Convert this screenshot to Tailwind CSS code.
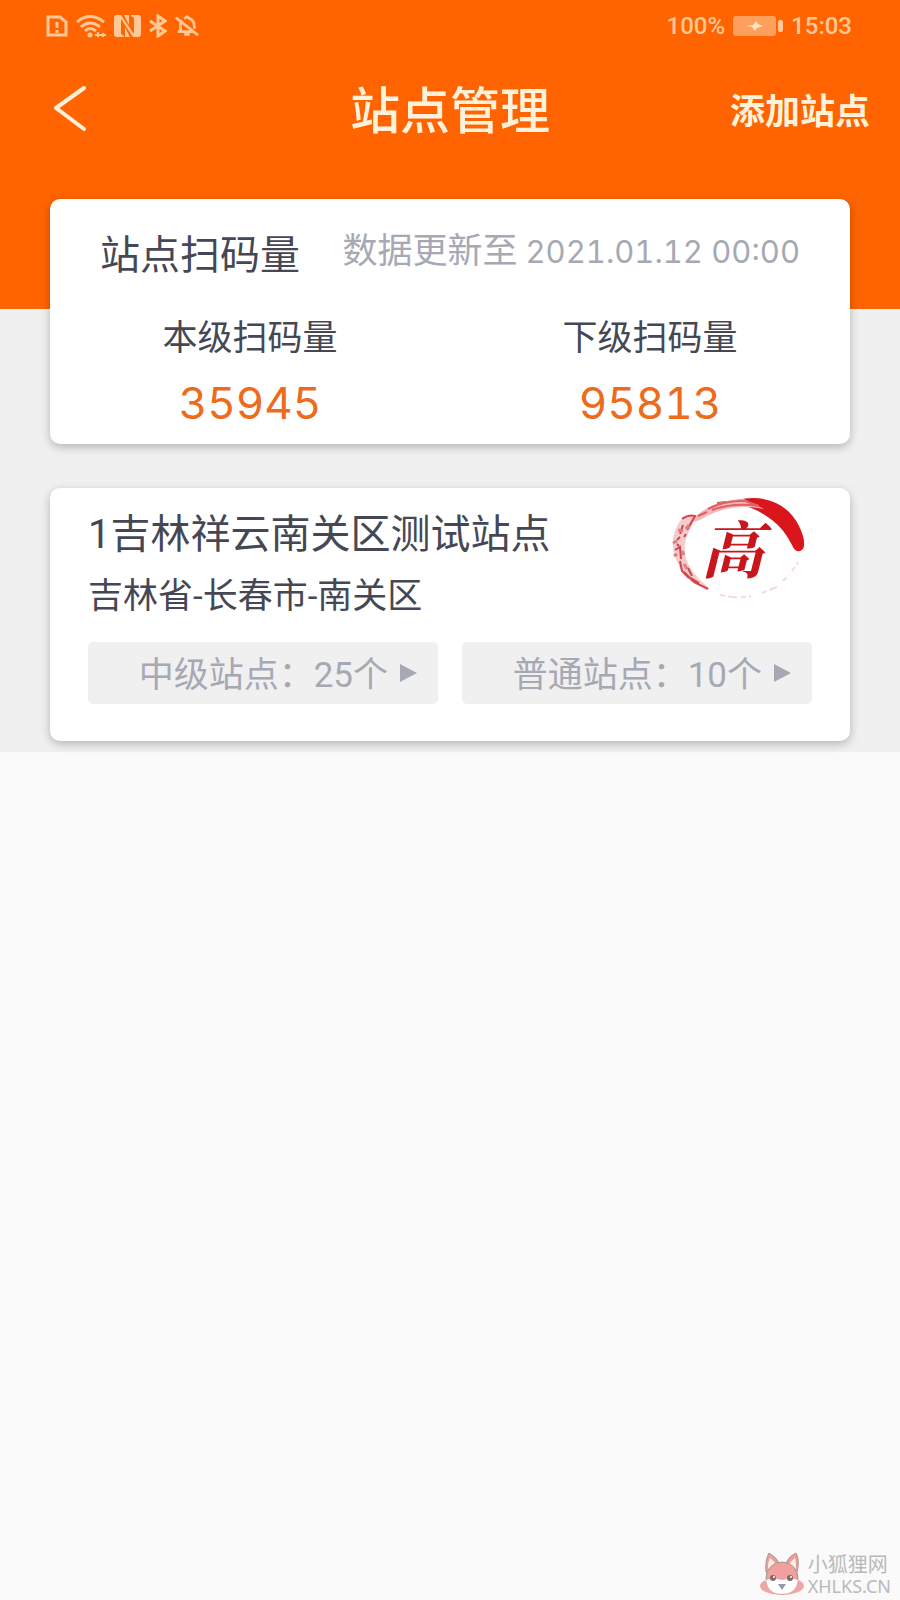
<!DOCTYPE html>
<html lang="zh-CN">
<head>
<meta charset="utf-8">
<meta name="viewport" content="width=device-width, initial-scale=1">
<title>站点管理</title>
<script src="https://cdn.jsdelivr.net/npm/@tailwindcss/browser@4"></script>
</head>
<body class="flex min-h-screen flex-col bg-[#fafafa] font-['Roboto','Noto_Sans_CJK_SC',sans-serif] text-[#454854]">
<div class="bg-[#f0f0f0] pb-[11px]">
  <header class="bg-[#ff6400] pb-[143px] text-[#fff1da]">
    <div class="flex h-[52px] items-center justify-between pr-12 pl-[46px] text-[24px] font-medium text-[#ffc896]">
      <div class="flex items-center gap-2">
        <svg class="h-6 w-[22px]" viewBox="0 0 22 24" fill="none" stroke="currentColor" stroke-width="3" aria-label="SIM"><path d="M2 3h12l6 5v13H2zM11 8v6M11 16v3"/></svg>
        <svg class="h-6 w-[30px]" viewBox="0 0 30 24" fill="none" stroke="currentColor" stroke-width="3" aria-label="Wi-Fi"><path d="M1 8q13-11 27 0M5 13q9-8 19 0M9 17q5-5 11 0"/><circle cx="14" cy="21" r="2.5" fill="currentColor" stroke="none"/><path d="M19 21h11M22 18v5M27 19v4" stroke-width="2"/></svg>
        <svg class="h-6 w-[27px]" viewBox="0 0 27 24" aria-label="NFC"><path d="M3 1h4l13 19V4l-3-2V1h7q3 0 3 3v16q0 3-3 3h-5L7 5v15l3 2v1H3q-3 0-3-3V4q0-3 3-3z" fill="currentColor"/><path d="M10 1h5v10zM11 13v10h5z" fill="currentColor"/></svg>
        <svg class="h-6 w-[18px]" viewBox="0 0 18 24" fill="none" stroke="currentColor" stroke-width="3" aria-label="Bluetooth"><path d="M1 7l15 10-7 5V2l7 5L1 17"/></svg>
        <svg class="h-6 w-[24px]" viewBox="0 0 26 24" fill="none" stroke="currentColor" stroke-width="3" aria-label="Silent"><path d="M1 3l24 19M3 18h17M6 18v-8q0-2 2-4M10 4l3-2 3 2q5 2 5 9v2M10 21h6"/></svg>
      </div>
      <div class="flex items-center gap-2">
        <span>100%</span>
        <svg class="h-5 w-[50px]" viewBox="0 0 50 20" aria-label="Battery"><rect width="43" height="20" rx="3" fill="#ff9f5e"/><rect x="45" y="4" width="5" height="12" rx="2" fill="currentColor"/><path d="M13 10l7-1 3-4 2 3 5 2-6 2-2 3-3-4z" fill="#ffe0bd"/></svg>
        <time>15:03</time>
      </div>
    </div>
    <nav class="grid h-[114px] grid-cols-[1fr_auto_1fr] items-center px-[30px]">
      <button type="button" aria-label="返回" class="ml-[22px] justify-self-start"><svg class="h-[50px] w-9" viewBox="0 0 36 50" fill="none" stroke="currentColor" stroke-width="4" stroke-linecap="round" stroke-linejoin="round"><path d="M32 4L4 24l28 21"/></svg></button>
      <h1 class="pt-1.5 text-[50px] leading-none font-medium">站点管理</h1>
      <button type="button" class="justify-self-end pt-1.5 text-[35px] leading-none font-bold">添加站点</button>
    </nav>
  </header>
  <main class="mx-[50px] -mt-[110px] flex flex-col gap-11">
    <section class="rounded-[10px] bg-white pt-[29px] pb-[13px] shadow-[0_3px_10px_rgba(0,0,0,0.25)]">
      <div class="flex items-center justify-between px-[50px] leading-[48px]">
        <h2 class="pt-2 text-[40px] leading-[40px]">站点扫码量</h2>
        <p class="flex items-center gap-2 text-[35px] text-[#a6a9b4]"><span>数据更新至</span><time class="font-['Inter'] text-[31px] tabular-nums">2021.01.12 00:00</time></p>
      </div>
      <dl class="mt-[43px] grid grid-cols-2 text-center">
        <div><dt class="text-[35px] leading-[40px]">本级扫码量</dt><dd class="mt-4 font-['Inter'] text-[44px] leading-[56px] text-[#ed6b1d] tabular-nums">35945</dd></div>
        <div><dt class="text-[35px] leading-[40px]">下级扫码量</dt><dd class="mt-4 font-['Inter'] text-[44px] leading-[56px] text-[#ed6b1d] tabular-nums">95813</dd></div>
      </dl>
    </section>
    <section class="rounded-[10px] bg-white px-[38px] pt-2 pb-[37px] shadow-[0_3px_10px_rgba(0,0,0,0.25)]">
      <div class="flex items-start justify-between">
        <div class="pt-[15px]">
          <h2 class="text-[40px] leading-[48px]">1吉林祥云南关区测试站点</h2>
          <p class="mt-[18px] text-[35px] leading-[40px]">吉林省-长春市-南关区</p>
        </div>
        <svg class="mr-1.5 h-[104px] w-[136px] shrink-0" viewBox="0 0 136 104" aria-label="高">
          <path d="M66 4Q90-1 106 7Q121 14 129 30Q135 42 134 50Q133 56 127 55Q124 54 122 49Q114 33 102 24Q88 13 72 9Z" fill="#da161c"/>
          <path d="M26 20Q45 3 74 3L94 13Q58 6 30 24L20 27Z" fill="#f3b7b9"/>
          <path d="M38 13q17-9 37-8l14 5Q64 6 42 14M28 20l9-4M47 7l9-1" fill="none" stroke="#dd6166" stroke-width="2"/>
          <path d="M10 25Q18 18 26 20l-5 12Q5 58 29 83l11 10Q17 89 9 70Q-4 46 10 25Z" fill="#f5cccd"/>
          <path d="M12 23q7-5 13-3l-8 14M13 29l-3 9M7 44l3-3M5 54l5-3 1 12M10 65l2 10 7 7M14 76l10 10 14 7M21 82l8 5M7 48l2 2M14 41l2-3M18 72l4 8" fill="none" stroke="#d2454b" stroke-width="2"/>
          <path d="M3 47l4-2M4 60l3-2M8 34l5 1M12 55l2 4M16 33l3-4M14 68l3 5" stroke="#e27c80" stroke-width="3"/>
          <path d="M50 99q17 4 31 1M92 97l15-6M113 85l6-6M122 75l6-9" fill="none" stroke="#f8d9da" stroke-width="2" stroke-dasharray="5 3 9 4"/>
          <text x="62" y="77" text-anchor="middle" class="fill-[#c9161c] font-['Noto_Serif_CJK_SC','Noto_Sans_CJK_SC',serif] text-[62px] font-bold italic">高</text>
        </svg>
      </div>
      <div class="mt-[25px] grid grid-cols-2 gap-6">
        <button type="button" class="flex h-[62px] items-center justify-end gap-3 rounded-[5px] bg-[#f0f0f0] pr-[21px] text-[35px] leading-none text-[#a6a9b4]"><span class="pt-1">中级站点：25个</span><svg class="h-[18px] w-[17px]" viewBox="0 0 17 18" fill="currentColor" aria-hidden="true"><path d="M0 0l17 9-17 9z"/></svg></button>
        <button type="button" class="flex h-[62px] items-center justify-end gap-3 rounded-[5px] bg-[#f0f0f0] pr-[21px] text-[35px] leading-none text-[#a6a9b4]"><span class="pt-1">普通站点：10个</span><svg class="h-[18px] w-[17px]" viewBox="0 0 17 18" fill="currentColor" aria-hidden="true"><path d="M0 0l17 9-17 9z"/></svg></button>
      </div>
    </section>
  </main>
</div>
<footer class="mt-auto flex items-center justify-end gap-1 pr-[9px] pb-1 text-[#b9b9b9]">
  <svg class="h-[44px] w-11" viewBox="0 0 44 44" aria-hidden="true">
    <ellipse cx="22" cy="34" rx="22" ry="9" fill="#efa7a5"/>
    <path d="M6 20Q5 8 9 1q7 4 10 10h7Q29 4 36 1q4 7 1 19z" fill="#ef9f9e" stroke="#a5958f"/>
    <path d="M8 17q0-7 2-11 5 4 6 7zM36 17q0-7-1-11-5 4-6 7z" fill="#fff0df"/>
    <circle cx="22" cy="26" r="16" fill="#efa09f" stroke="#a5958f"/>
    <path d="M6 28q8-2 11-1l5 1 6-1q5-1 10 1-2 14-16 14T6 28z" fill="#fff"/>
    <circle cx="13" cy="26" r="3" fill="#7c6d6c"/><circle cx="30" cy="26" r="3" fill="#7c6d6c"/>
    <circle cx="14" cy="25" r="1" fill="#fff"/><circle cx="31" cy="25" r="1" fill="#fff"/>
    <path d="M18 32h8l-4 6z" fill="#909da3"/>
  </svg>
  <div class="font-['Noto_Sans','Noto_Sans_CJK_SC',sans-serif]"><p class="text-[20px] leading-[24px]">小狐狸网</p><p class="text-[18px] leading-[18px]">XHLKS.CN</p></div>
</footer>
</body>
</html>
